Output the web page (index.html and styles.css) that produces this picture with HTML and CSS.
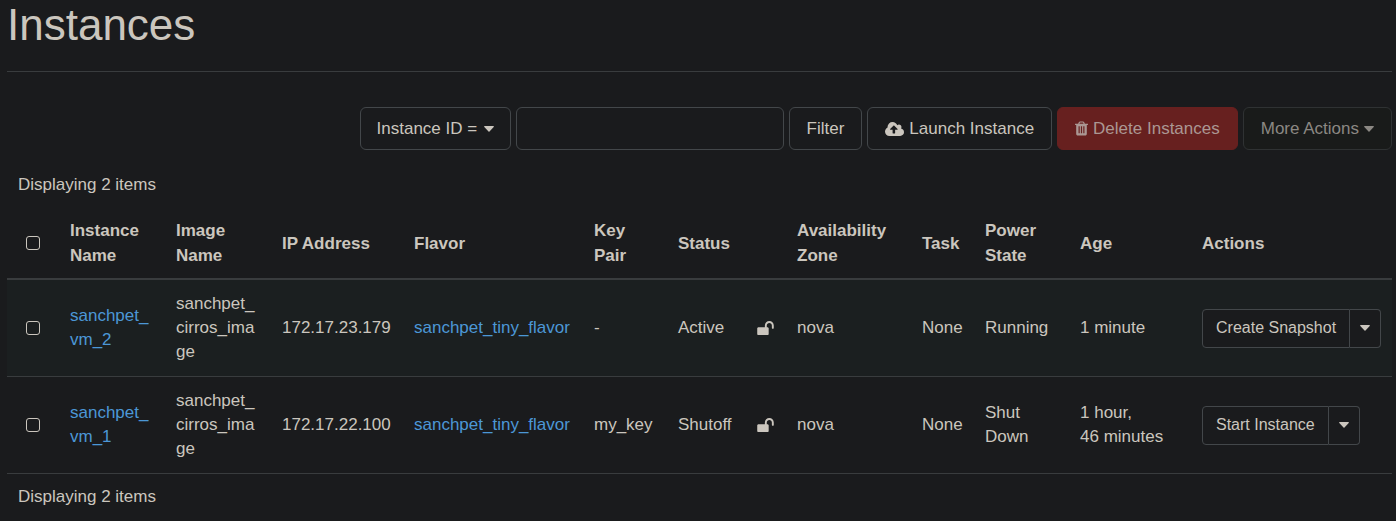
FILE: index.html
```html
<!DOCTYPE html>
<html lang="en">
<head>
<meta charset="utf-8">
<title>Instances</title>
<link rel="stylesheet" href="styles.css">
</head>
<body>
<svg class="sprite" aria-hidden="true">
  <symbol id="caret" viewBox="0 0 10 6"><path d="M0.6 0H9.4Q10.2 0.2 9.7 0.9L5.5 5.4Q5 5.9 4.5 5.4L0.3 0.9Q-0.2 0.2 0.6 0Z"/></symbol>
  <symbol id="cloud" viewBox="0 0 1920 1408"><path d="M1280 736q0-14-9-23L919 361q-9-9-23-9t-23 9L522 712q-10 12-10 24 0 14 9 23t23 9h224v352q0 13 9.500 22.500t22.500 9.500h192q13 0 22.500-9.500t9.500-22.500V768h224q13 0 22.500-9.500t9.500-22.500zm640 288q0 159-112.500 271.500T1536 1408H448q-185 0-316.500-131.500T0 960q0-130 70-240t188-165q-2-30-2-43 0-212 150-362T768 0q156 0 285.500 87T1242 318q71-62 166-62 106 0 181 75t75 181q0 76-41 138 130 31 213.500 135.500T1920 1024z"/></symbol>
  <symbol id="trash" viewBox="0 0 1408 1536"><path d="M512 1248V544q0-14-9-23t-23-9h-64q-14 0-23 9t-9 23v704q0 14 9 23t23 9h64q14 0 23-9t9-23zm256 0V544q0-14-9-23t-23-9h-64q-14 0-23 9t-9 23v704q0 14 9 23t23 9h64q14 0 23-9t9-23zm256 0V544q0-14-9-23t-23-9h-64q-14 0-23 9t-9 23v704q0 14 9 23t23 9h64q14 0 23-9t9-23zM480 256h448l-48-117q-7-9-17-11H546q-10 2-17 11zm928 32v64q0 14-9 23t-23 9h-96v948q0 83-47 143.500t-113 60.500H288q-66 0-113-58.500T128 1336V384H32q-14 0-23-9t-9-23v-64q0-14 9-23t23-9h309l70-167q15-37 54-63t79-26h320q40 0 79 26t54 63l70 167h309q14 0 23 9t9 23z"/></symbol>
  <symbol id="unlock" viewBox="0 0 1664 1408"><path d="M1664 448v256q0 26-19 45t-45 19h-64q-26 0-45-19t-19-45V448q0-106-75-181t-181-75-181 75-75 181v192h96q40 0 68 28t28 68v576q0 40-28 68t-68 28H96q-40 0-68-28t-28-68V736q0-40 28-68t68-28h672V448q0-185 131.500-316.500T1216 0t316.500 131.500T1664 448z"/></symbol>
</svg>
<main class="page">
  <h1 class="page-title">Instances</h1>

  <form class="toolbar">
    <div class="field-picker">
      <select class="btn field-select" aria-label="Filter field">
        <option>Instance ID =</option>
      </select>
      <svg class="caret field-caret" aria-hidden="true"><use href="#caret"/></svg>
    </div>
    <input class="filter-input" type="text" aria-label="Filter value">
    <button class="btn" type="button">Filter</button>
    <button class="btn" type="button"><svg class="icon-cloud" aria-hidden="true"><use href="#cloud"/></svg>Launch Instance</button>
    <button class="btn btn-danger" type="button" disabled><svg class="icon-trash" aria-hidden="true"><use href="#trash"/></svg>Delete Instances</button>
    <button class="btn" type="button" disabled>More Actions<svg class="caret" aria-hidden="true"><use href="#caret"/></svg></button>
  </form>

  <p class="count">Displaying 2 items</p>
  <table class="instances">
    <colgroup>
      <col class="c-check"><col class="c-name"><col class="c-name"><col class="c-ip"><col class="c-flavor"><col class="c-key"><col class="c-status"><col class="c-lock"><col class="c-zone"><col class="c-task"><col class="c-power"><col class="c-age"><col class="c-actions">
    </colgroup>
    <thead>
      <tr>
        <th class="check-cell"><input class="check" type="checkbox" aria-label="Select all"></th>
        <th>Instance Name</th>
        <th>Image Name</th>
        <th>IP Address</th>
        <th>Flavor</th>
        <th>Key Pair</th>
        <th>Status</th>
        <th></th>
        <th>Availability Zone</th>
        <th>Task</th>
        <th>Power State</th>
        <th>Age</th>
        <th>Actions</th>
      </tr>
    </thead>
    <tbody>
      <tr>
        <td class="check-cell"><input class="check" type="checkbox" aria-label="Select sanchpet_vm_2"></td>
        <td><a href="#">sanchpet_<wbr>vm_2</a></td>
        <td>sanchpet_<wbr>cirros_image</td>
        <td>172.17.23.179</td>
        <td><a href="#">sanchpet_tiny_flavor</a></td>
        <td>-</td>
        <td>Active</td>
        <td><svg class="icon-lock" role="img" aria-label="Unlocked"><use href="#unlock"/></svg></td>
        <td>nova</td>
        <td>None</td>
        <td>Running</td>
        <td>1 minute</td>
        <td><div class="split"><button class="btn-sm" type="button">Create Snapshot</button><button class="btn-sm btn-toggle" type="button" aria-label="More actions"><svg class="caret" aria-hidden="true"><use href="#caret"/></svg></button></div></td>
      </tr>
      <tr>
        <td class="check-cell"><input class="check" type="checkbox" aria-label="Select sanchpet_vm_1"></td>
        <td><a href="#">sanchpet_<wbr>vm_1</a></td>
        <td>sanchpet_<wbr>cirros_image</td>
        <td>172.17.22.100</td>
        <td><a href="#">sanchpet_tiny_flavor</a></td>
        <td>my_key</td>
        <td>Shutoff</td>
        <td><svg class="icon-lock" role="img" aria-label="Unlocked"><use href="#unlock"/></svg></td>
        <td>nova</td>
        <td>None</td>
        <td>Shut Down</td>
        <td>1 hour, 46&nbsp;minutes</td>
        <td><div class="split"><button class="btn-sm" type="button">Start Instance</button><button class="btn-sm btn-toggle" type="button" aria-label="More actions"><svg class="caret" aria-hidden="true"><use href="#caret"/></svg></button></div></td>
      </tr>
    </tbody>
  </table>
  <p class="count">Displaying 2 items</p>
</main>
</body>
</html>
```
FILE: styles.css
```css
* { box-sizing: border-box; }

body {
  margin: 0;
  background: #1a1b1d;
  color: #cbc6be;
  font: 17px/24px "Liberation Sans", Arial, sans-serif;
}

.sprite { display: none; }

svg { fill: currentColor; }

.page { padding: 0 4px 0 7px; }

.page-title {
  margin: 0 0 35px;
  padding-bottom: 21px;
  border-bottom: 1px solid #393c3e;
  font-size: 44px;
  font-weight: 400;
  line-height: 50px;
}

.toolbar {
  display: flex;
  justify-content: flex-end;
  gap: 5px;
}

.btn,
.filter-input {
  height: 43px;
  border: 1px solid #43474a;
  border-radius: 6px;
  background: #1a1b1d;
  color: inherit;
  font: inherit;
}

.btn {
  display: flex;
  align-items: center;
  gap: 5px;
  padding: 0 17px;
  white-space: nowrap;
}

.btn:disabled {
  border-color: #2f3233;
  background: #191b1a;
  color: #8b8883;
}

.btn-danger:disabled {
  border-color: #67201f;
  background: #67201f;
  color: #ab9793;
}

.filter-input {
  width: 268px;
  padding: 0 12px;
}

.field-picker {
  display: grid;
  align-items: center;
}

.field-select {
  grid-area: 1 / 1;
  appearance: none;
  padding: 0 32px 0 16px;
}

.field-caret {
  grid-area: 1 / 1;
  justify-self: end;
  margin-right: 17px;
  pointer-events: none;
}

.caret { width: 10px; height: 6px; }
.icon-cloud { width: 19px; height: 14px; }
.icon-trash { width: 13px; height: 15px; }
.icon-lock { display: block; width: 17px; height: 14px; }

.count {
  margin: 0;
  padding: 11px;
}

.toolbar + .count { padding-top: 23px; }

.instances {
  width: 100%;
  table-layout: fixed;
  border-collapse: collapse;
}

.c-check { width: 52px; }
.c-name { width: 106px; }
.c-ip { width: 132px; }
.c-flavor { width: 180px; }
.c-key { width: 84px; }
.c-status { width: 79px; }
.c-lock { width: 40px; }
.c-zone { width: 125px; }
.c-task { width: 63px; }
.c-power { width: 95px; }
.c-age { width: 122px; }
.c-actions { width: 201px; }

.instances th,
.instances td {
  padding: 12px 11px;
  text-align: left;
  vertical-align: middle;
  overflow-wrap: break-word;
}

.instances td { border-bottom: 1px solid #393c3e; }

.instances th {
  padding: 10px 11px;
  border-bottom: 2px solid #393c3e;
  line-height: 25px;
}

.instances tbody tr:nth-child(odd) { background: #1b1f20; }

.instances .check-cell { text-align: center; }

.check {
  appearance: none;
  display: block;
  width: 14px;
  height: 14px;
  margin: 0 auto;
  border: 1px solid #cbc6be;
  border-radius: 3px;
}

a {
  color: #4c97d6;
  text-decoration: none;
}

.split { display: flex; }

.btn-sm {
  height: 39px;
  padding: 0 13px;
  border: 1px solid #43474a;
  border-radius: 4px 0 0 4px;
  background: #1a1b1d;
  color: inherit;
  font: inherit;
  font-size: 16px;
  white-space: nowrap;
}

.btn-toggle {
  display: flex;
  align-items: center;
  padding: 0 10px;
  border-left: 0;
  border-radius: 0 4px 4px 0;
}
```
